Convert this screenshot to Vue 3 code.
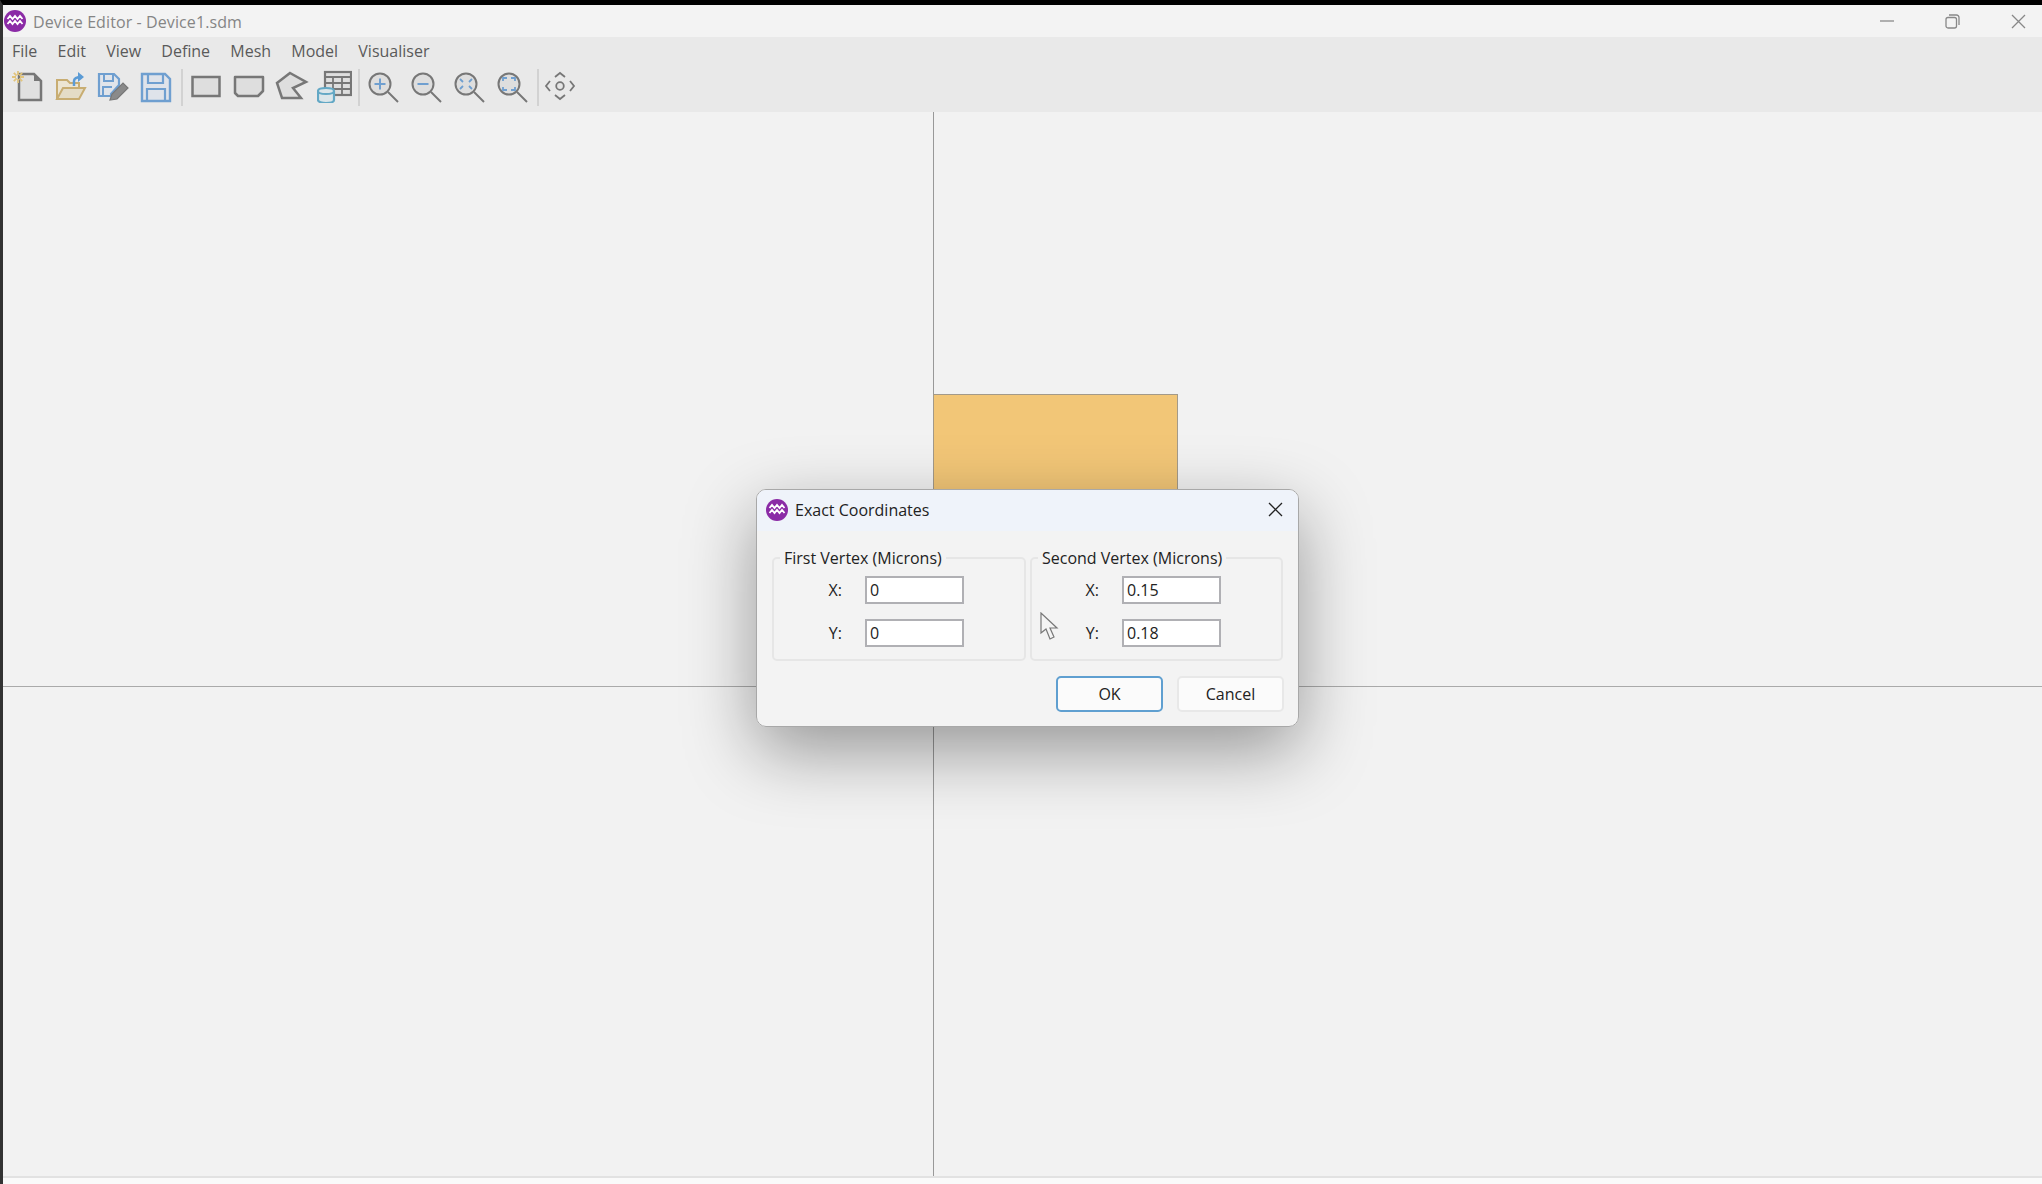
<script setup>
const menus = ['File', 'Edit', 'View', 'Define', 'Mesh', 'Model', 'Visualiser']

const groups = [
  { title: 'First Vertex (Microns)', x: '0', y: '0' },
  { title: 'Second Vertex (Microns)', x: '0.15', y: '0.18' },
]

const wave = 'M-7.500 -2l2.500 -3 2.500 3 2.500 -3 2.500 3 2.500 -3 2.500 3M-7.500 3l2.500 -3 2.500 3 2.500 -3 2.500 3 2.500 -3 2.500 3'
</script>

<template>
  <div class="window">
    <div class="titlebar">
      <svg class="app-icon" width="22" height="22" viewBox="-11 -11 22 22">
        <circle r="11" fill="#8b2ba6" />
        <path :d="wave" fill="none" stroke="#fff" stroke-width="1.800" />
      </svg>
      <span class="title">Device Editor - Device1.sdm</span>
      <div class="controls">
        <svg width="14" height="14" viewBox="0 0 14 14"><path d="M0 7h14" stroke="#999" stroke-width="1.500" /></svg>
        <svg width="15" height="15" viewBox="0 0 15 15" fill="none" stroke="#888" stroke-width="1.300">
          <rect x="1" y="3.500" width="10.500" height="10.500" rx="2" />
          <path d="M4 1h7.500a2.500 2.500 0 0 1 2.500 2.500V11" />
        </svg>
        <svg width="15" height="15" viewBox="0 0 15 15"><path d="M1 1l13 13M14 1L1 14" stroke="#888" stroke-width="1.300" /></svg>
      </div>
    </div>

    <nav class="menubar">
      <span v-for="m in menus" :key="m">{{ m }}</span>
    </nav>

    <div class="toolbar">
      <!-- new -->
      <svg class="tool" viewBox="0 0 34 34">
        <path d="M9 13V5h15l7 7v19H9z" fill="#e0e0e0" stroke="#777" stroke-width="2.500" />
        <path d="M24 5v7h7z" fill="#777" />
        <path d="M8 2v4M8 10v4M2 8h4M10 8h4M3.800 3.800l2.800 2.800M9.400 9.400l2.800 2.800M12.200 3.800L9.400 6.600M6.600 9.400l-2.800 2.800" stroke="#e1c47c" stroke-width="1.800" />
      </svg>
      <!-- open -->
      <svg class="tool" viewBox="0 0 34 34">
        <path d="M4 30V11h10l3 3h9v5" fill="#ece5d2" stroke="#c8ad72" stroke-width="2" />
        <path d="M4 30l6-11h22l-6 11z" fill="#e4dcc6" stroke="#c8ad72" stroke-width="2" />
        <path d="M21 17v-5c0-3 3-4 8-4" fill="none" stroke="#5b9bd5" stroke-width="2.500" />
        <path d="M25 3l6 5-6 5z" fill="#5b9bd5" />
      </svg>
      <!-- save as -->
      <svg class="tool" viewBox="0 0 34 34">
        <path d="M3 5h15l5 5v6l-8 9v2H3z" fill="#e0e4ea" stroke="#6f9fd0" stroke-width="2.200" />
        <path d="M8 5v7h9V5M7 27v-9h9" fill="none" stroke="#6f9fd0" stroke-width="2" />
        <path d="M14 31l2-6L27 14l5 5-11 11z" fill="#8a8a8a" stroke="#777" stroke-width="1.200" />
      </svg>
      <!-- save -->
      <svg class="tool" viewBox="0 0 34 34">
        <path d="M3 5h23l5 5v22H3z" fill="#dfe3ea" stroke="#6f9fd0" stroke-width="2.400" />
        <path d="M9 5v9h15V5M8 32V20h18v12" fill="none" stroke="#6f9fd0" stroke-width="2.200" />
      </svg>
      <i class="sep" />
      <!-- rectangle -->
      <svg class="tool" viewBox="0 0 34 34">
        <rect x="3.500" y="8" width="27" height="19" fill="#dedede" stroke="#777" stroke-width="2.500" />
      </svg>
      <!-- rounded rectangle -->
      <svg class="tool" viewBox="0 0 34 34">
        <path d="M3 8h28v14l-5 5H6l-3-3z" fill="#dedede" stroke="#777" stroke-width="2.500" stroke-linejoin="round" />
      </svg>
      <!-- polygon -->
      <svg class="tool" viewBox="0 0 34 34">
        <path d="M15 4l16 9-13 6 8 10H7L2 14z" fill="#dedede" stroke="#777" stroke-width="2.500" />
      </svg>
      <!-- table with database -->
      <svg class="tool table" viewBox="-1 0 35 34">
        <rect x="7" y="3" width="26" height="23" fill="#dedede" stroke="#777" stroke-width="2.200" />
        <path d="M7 8h26M7 14h26M7 20h26M15 8v18M24 8v18" stroke="#777" stroke-width="1.800" />
        <path d="M0 22c0-4 16-4 16 0v9c0 4-16 4-16 0z" fill="#dbe6ea" stroke="#63a8c5" stroke-width="2.200" />
        <path d="M0 22c0 4 16 4 16 0" fill="none" stroke="#63a8c5" stroke-width="2" />
      </svg>
      <i class="sep sep-mid" />
      <!-- zoom in -->
      <svg class="tool" viewBox="0 0 34 34">
        <circle cx="13" cy="15" r="10.500" fill="#dedede" stroke="#777" stroke-width="2" />
        <path d="M21 23l10 10" stroke="#777" stroke-width="2" />
        <path d="M7.500 15h11M13 9.500v11" stroke="#6f9fd0" stroke-width="2" />
      </svg>
      <!-- zoom out -->
      <svg class="tool" viewBox="0 0 34 34">
        <circle cx="13" cy="15" r="10.500" fill="#dedede" stroke="#777" stroke-width="2" />
        <path d="M21 23l10 10" stroke="#777" stroke-width="2" />
        <path d="M7.500 15h11" stroke="#6f9fd0" stroke-width="2" />
      </svg>
      <!-- zoom fit -->
      <svg class="tool" viewBox="0 0 34 34">
        <circle cx="13" cy="15" r="10.500" fill="#dedede" stroke="#777" stroke-width="2" />
        <path d="M21 23l10 10" stroke="#777" stroke-width="2" />
        <path d="M7 10l3 3M19 10l-3 3M7 20l3-3M19 20l-3-3" stroke="#6f9fd0" stroke-width="1.800" />
      </svg>
      <!-- zoom extents -->
      <svg class="tool" viewBox="0 0 34 34">
        <circle cx="13" cy="15" r="10.500" fill="#dedede" stroke="#777" stroke-width="2" />
        <path d="M21 23l10 10" stroke="#777" stroke-width="2" />
        <path d="M7 12V9h4M15 9h4v3M7 18v3h4M15 21h4v-3" fill="none" stroke="#6f9fd0" stroke-width="1.800" />
      </svg>
      <i class="sep sep-end" />
      <!-- pan -->
      <svg class="tool" viewBox="0 0 34 34">
        <circle cx="16" cy="17" r="3.800" fill="#e6e6e6" stroke="#777" stroke-width="1.800" />
        <path d="M11 8l5-4 5 4M11 26l5 4 5-4M6 12l-4 5 4 5M26 12l4 5-4 5" fill="none" stroke="#777" stroke-width="1.800" />
      </svg>
    </div>

    <main class="canvas">
      <div class="axis-v" />
      <div class="axis-h" />
      <div class="shape" />
    </main>

    <div class="statusbar" />

    <section class="dialog">
      <header class="dialog-head">
        <svg width="22" height="22" viewBox="-11 -11 22 22">
          <circle r="11" fill="#8b2ba6" />
          <path :d="wave" fill="none" stroke="#fff" stroke-width="1.800" />
        </svg>
        <span>Exact Coordinates</span>
        <svg class="dialog-close" width="15" height="15" viewBox="0 0 15 15">
          <path d="M1 1l13 13M14 1L1 14" stroke="#222" stroke-width="1.300" />
        </svg>
      </header>

      <div class="dialog-body">
        <div class="groups">
          <fieldset v-for="g in groups" :key="g.title">
            <legend>{{ g.title }}</legend>
            <div class="row">
              <label>X:</label>
              <input type="text" :value="g.x" />
            </div>
            <div class="row">
              <label>Y:</label>
              <input type="text" :value="g.y" />
            </div>
          </fieldset>
        </div>
        <div class="buttons">
          <button class="primary">OK</button>
          <button>Cancel</button>
        </div>
      </div>
    </section>

    <svg class="cursor" width="20" height="29" viewBox="0 0 20 29">
      <path d="M1 1v20l5-4 4 10 4-2-4-9h7z" fill="#f4f4f4" stroke="#777" stroke-width="1.200" />
    </svg>
  </div>
</template>

<style scoped>
.window {
  position: relative;
  width: 2042px;
  height: 1184px;
  box-sizing: border-box;
  display: flex;
  flex-direction: column;
  border-top: 5px solid #000;
  border-left: 3px solid #333;
  overflow: hidden;
  background: #f2f2f2;
  font-family: "Open Sans", "Noto Sans", sans-serif;
  font-size: 16px;
  color: #222;
}

.titlebar {
  height: 32px;
  display: flex;
  align-items: center;
  padding-left: 1px;
  background: #f3f3f3;
}

.title {
  margin: 2px 0 0 7px;
  letter-spacing: 0.1px;
  color: #858585;
}

.controls {
  margin-left: auto;
  display: flex;
  align-items: center;
  gap: 51px;
  padding-right: 16px;
}

.menubar {
  height: 28px;
  display: flex;
  align-items: center;
  gap: 20.200px;
  padding-left: 9px;
  background: #e9e9e9;
  color: #5a5a5a;
}

.toolbar {
  height: 47px;
  display: flex;
  align-items: flex-start;
  padding: 4px 0 0 7px;
  box-sizing: border-box;
  background: #e9e9e9;
}

.tool {
  width: 34px;
  height: 34px;
  margin-right: 9px;
  flex: none;
}

.table {
  width: 35px;
  margin: 0 7px 0 -1px;
}

.sep {
  width: 2px;
  height: 37px;
  margin: 0 6px 0 -1px;
  background: #d2d2d2;
}

.sep-mid {
  margin-right: 7px;
}

.sep-end {
  margin: 0 5px 0 -2px;
}

.canvas {
  flex: 1;
  position: relative;
  background: #f2f2f2;
}

.axis-v {
  position: absolute;
  left: 930px;
  top: 0;
  bottom: 0;
  width: 1px;
  background: #999;
}

.axis-h {
  position: absolute;
  left: 0;
  right: 0;
  top: 574px;
  height: 1px;
  background: #aaa;
}

.shape {
  position: absolute;
  left: 930px;
  top: 282px;
  width: 245px;
  height: 292px;
  box-sizing: border-box;
  background: #f2c677;
  border: 1px solid #a39a8a;
}

.statusbar {
  height: 8px;
  border-top: 2px solid #e2e2e2;
  box-sizing: border-box;
  background: #fafafa;
}

.dialog {
  position: absolute;
  left: 753px;
  top: 484px;
  width: 543px;
  height: 238px;
  box-sizing: border-box;
  border: 1px solid #a8a8a8;
  border-radius: 10px;
  overflow: hidden;
  background: #f3f3f3;
  display: flex;
  flex-direction: column;
  z-index: 1;
}

.window::after {
  content: "";
  position: absolute;
  left: 753px;
  top: 484px;
  width: 543px;
  height: 238px;
  border-radius: 10px;
  box-shadow: 0 24px 70px rgba(0, 0, 0, 0.38);
  pointer-events: none;
}

.dialog-head {
  height: 41px;
  flex: none;
  display: flex;
  align-items: center;
  gap: 7px;
  padding: 0 12px 2px 9px;
  box-sizing: border-box;
  background: #eff3fa;
}

.dialog-head .dialog-close {
  margin: 0 3px 0 auto;
}

.dialog-body {
  flex: 1;
  padding: 16px 14px 0 15px;
}

.groups {
  display: grid;
  grid-template-columns: 254px 253px;
  gap: 4px;
}

fieldset {
  margin: 0;
  padding: 7px 0 0;
  height: 114px;
  box-sizing: border-box;
  border: 2px solid #e6e6e6;
  border-radius: 5px;
  display: flex;
  flex-direction: column;
  gap: 15px;
}

legend {
  margin-left: 6px;
  padding: 0 4px;
  line-height: 22px;
}

.row {
  display: flex;
  align-items: center;
  gap: 23px;
}

label {
  width: 68px;
  text-align: right;
}

fieldset:last-child label {
  width: 67px;
}

input {
  width: 99px;
  height: 28px;
  box-sizing: border-box;
  padding: 0 3px;
  border: 2px solid #b0b0b4;
  border-radius: 0;
  background: #fff;
  outline: none;
  font: inherit;
  color: #222;
}

.buttons {
  display: flex;
  justify-content: flex-end;
  gap: 14px;
  margin-top: 15px;
}

button {
  width: 107px;
  height: 36px;
  box-sizing: border-box;
  border: 2px solid #e8e8e8;
  border-radius: 5px;
  background: #fbfbfb;
  font: inherit;
  color: #222;
}

.primary {
  border-color: #5f9fd0;
}

.cursor {
  position: absolute;
  left: 1037px;
  top: 607px;
  z-index: 2;
}
</style>

<style>
html, body {
  margin: 0;
  background: #f2f2f2;
}
</style>
